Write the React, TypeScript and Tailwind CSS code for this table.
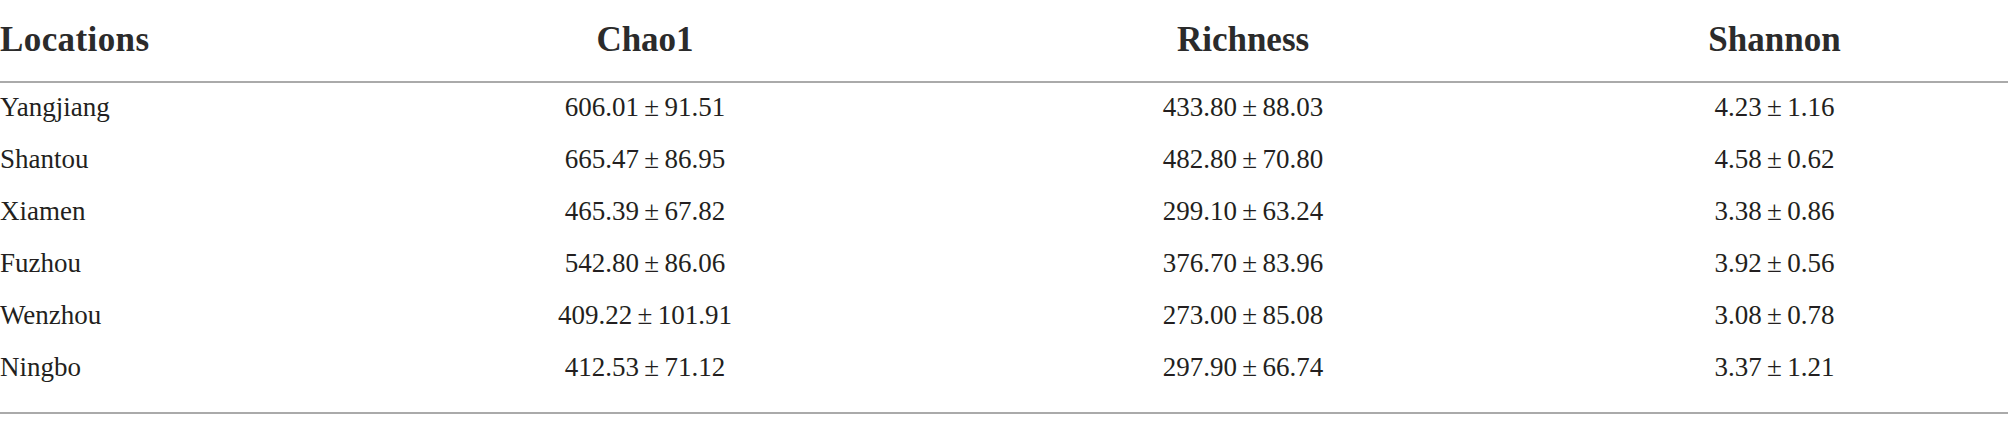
const pm = "\u2009±\u2009";

const rows: [string, string, string, string][] = [
  ["Yangjiang", `606.01${pm}91.51`, `433.80${pm}88.03`, `4.23${pm}1.16`],
  ["Shantou", `665.47${pm}86.95`, `482.80${pm}70.80`, `4.58${pm}0.62`],
  ["Xiamen", `465.39${pm}67.82`, `299.10${pm}63.24`, `3.38${pm}0.86`],
  ["Fuzhou", `542.80${pm}86.06`, `376.70${pm}83.96`, `3.92${pm}0.56`],
  ["Wenzhou", `409.22${pm}101.91`, `273.00${pm}85.08`, `3.08${pm}0.78`],
  ["Ningbo", `412.53${pm}71.12`, `297.90${pm}66.74`, `3.37${pm}1.21`],
];

const cols = "grid grid-cols-[345px_600px_596px_467px]";

export default function App() {
  return (
    <div className="w-[2008px] h-[431px] bg-white text-[#231f20] font-['Liberation_Serif',serif]">
      <div className={`${cols} h-[83px] pt-[20px] border-b-2 border-[#aaaaaa] text-[35px] leading-[40px] font-bold text-[#2b2b2b]`}>
        <div className="tracking-[0.4px]">Locations</div>
        <div className="text-center">Chao1</div>
        <div className="text-center">Richness</div>
        <div className="text-center">Shannon</div>
      </div>
      <div className="border-b-2 border-[#aaaaaa] pb-[17px]">
        {rows.map((r) => (
          <div key={r[0]} className={`${cols} h-[52px] text-[27px] leading-[48px]`}>
            <div>{r[0]}</div>
            <div className="text-center">{r[1]}</div>
            <div className="text-center">{r[2]}</div>
            <div className="text-center">{r[3]}</div>
          </div>
        ))}
      </div>
    </div>
  );
}
